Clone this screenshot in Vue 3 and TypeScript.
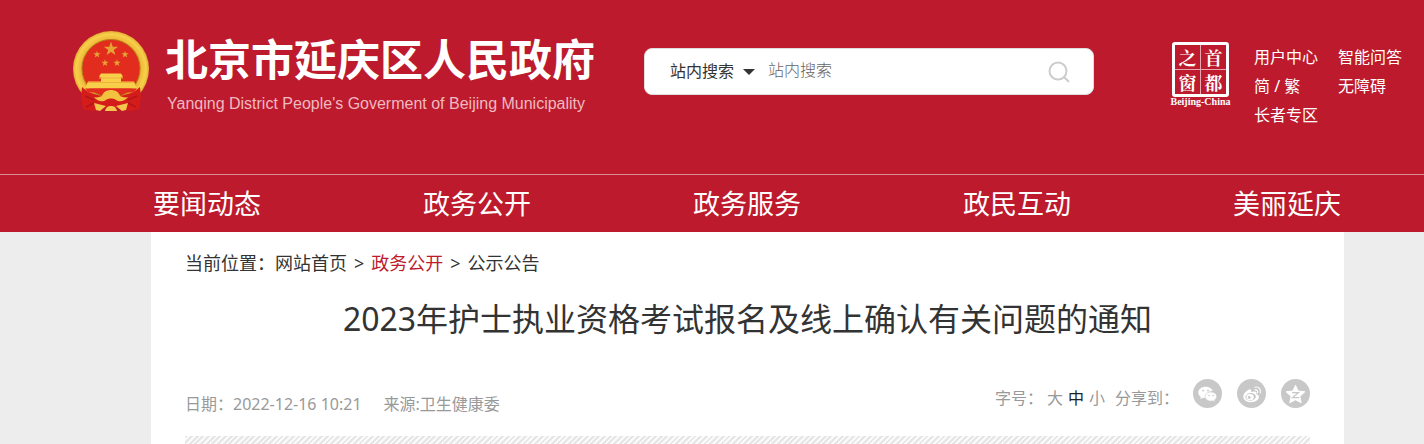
<script setup lang="ts">
import { ref } from 'vue'

interface LinkItem {
  label: string
  href: string
}

const keyword = ref('')
const scope = ref('site')
const fontSize = ref('中')

const quickLinks: LinkItem[] = [
  { label: '用户中心', href: '#user' },
  { label: '智能问答', href: '#qa' },
  { label: '简 / 繁', href: '#lang' },
  { label: '无障碍', href: '#access' },
  { label: '长者专区', href: '#elder' },
]

const navItems: LinkItem[] = [
  { label: '要闻动态', href: '#news' },
  { label: '政务公开', href: '#open' },
  { label: '政务服务', href: '#service' },
  { label: '政民互动', href: '#interact' },
  { label: '美丽延庆', href: '#yanqing' },
]

const sizes: string[] = ['大', '中', '小']

const smallStars = [
  { x: 25, y: 24.5 },
  { x: 53, y: 24.5 },
  { x: 33, y: 33 },
  { x: 45, y: 33 },
]
</script>

<template>
  <div class="page">
    <header class="header">
      <div class="top">
        <a class="brand" href="#home">
          <svg class="emblem" viewBox="0 0 78 82" aria-hidden="true">
            <defs>
              <radialGradient id="ring" cx="50%" cy="50%" r="50%">
                <stop offset="74%" stop-color="#cf9722" />
                <stop offset="80%" stop-color="#efba39" />
                <stop offset="92%" stop-color="#f7d04c" />
                <stop offset="100%" stop-color="#e3ab31" />
              </radialGradient>
              <path id="star" d="M0-1 .23-.31.95-.31.37.12.59.81 0 .39-.59.81-.37.12-.95-.31-.23-.31Z" />
            </defs>
            <circle cx="39" cy="39" r="38" fill="url(#ring)" />
            <circle cx="39" cy="38.500" r="29" fill="#e12c1e" stroke="#b77a19" />
            <use href="#star" transform="translate(39 19) scale(7.500)" fill="#e6a233" />
            <use
              v-for="s in smallStars"
              :key="`${s.x}-${s.y}`"
              href="#star"
              :transform="`translate(${s.x} ${s.y}) scale(3.800)`"
              fill="#e6a233"
            />
            <path d="M29 43.500h20l2 3-2 1v4h13l3 7H13l3-7h13v-4l-2-1Z" fill="#f7cf4a" />
            <path d="M27 48h24M16 52.500h46" stroke="#eeb13a" />
            <path d="M13 58.500h52l-3 4H16Z" fill="#e12c1e" />
            <path d="M10 57 16 62 29 66 39 62 49 66 62 62 68 57 69 68 67 79 58 81 39 77 20 81 11 79 9 68Z" fill="#d41d1b" />
            <path d="M13 66 22 70M14 77 22 73M65 66 56 70M64 77 56 73" stroke="#b3151b" stroke-width="1.500" />
            <path d="M22 67c3 1 5 0 8-1 1-4 5-6 9-6s8 2 9 6c3 1 5 2 8 1-4 5-9 5-12 3-2-2-8-2-10 0-3 2-8 2-12-3Z" fill="#f3c23e" />
            <path d="M22 73 34 76 28 81 24 80Z" fill="#f3c64c" />
            <path d="M56 73 44 76 50 81 54 80Z" fill="#f3c64c" />
            <path d="M33 81c1-4 3-5 6-5s5 1 6 5Z" fill="#f3c64c" />
          </svg>
          <span class="brand-text">
            <span class="brand-name">北京市延庆区人民政府</span>
            <span class="brand-en">Yanqing District People's Goverment of Beijing Municipality</span>
          </span>
        </a>

        <form class="search" @submit.prevent>
          <select v-model="scope" class="scope" aria-label="搜索范围">
            <option value="site">站内搜索</option>
          </select>
          <svg class="caret" viewBox="0 0 12 6" aria-hidden="true"><path d="M0 0h12L6 6Z" fill="#333" /></svg>
          <input v-model="keyword" class="keyword" type="text" placeholder="站内搜索" aria-label="站内搜索" />
          <button class="search-btn" type="submit" aria-label="搜索">
            <svg viewBox="0 0 22 22" fill="none" stroke="#ccc" stroke-width="2">
              <circle cx="10" cy="10" r="8.500" />
              <path d="m16 16 5 5" />
            </svg>
          </button>
        </form>

        <div class="aside">
          <a class="capital" href="#capital" aria-label="首都之窗">
            <span class="seal">
              <span>之</span><span>首</span><span>窗</span><span>都</span>
            </span>
            <span class="capital-en">Beijing-China</span>
          </a>
          <nav class="quick" aria-label="快捷入口">
            <a v-for="l in quickLinks" :key="l.label" :href="l.href">{{ l.label }}</a>
          </nav>
        </div>
      </div>

      <nav class="nav" aria-label="主导航">
        <a v-for="n in navItems" :key="n.label" :href="n.href">{{ n.label }}</a>
      </nav>
    </header>

    <main class="content">
      <nav class="crumbs" aria-label="当前位置">
        <span>当前位置：</span><a href="#home">网站首页</a><span class="sep">&gt;</span><a class="active" href="#open">政务公开</a><span class="sep">&gt;</span><a href="#notice">公示公告</a>
      </nav>

      <h1 class="title">2023年护士执业资格考试报名及线上确认有关问题的通知</h1>

      <div class="meta">
        <div class="info">
          <span>日期：2022-12-16 10:21</span>
          <span>来源:卫生健康委</span>
        </div>
        <div class="tools">
          <span class="label">字号：</span>
          <div class="sizes">
            <button
              v-for="s in sizes"
              :key="s"
              type="button"
              :class="{ current: s === fontSize }"
              @click="fontSize = s"
            >{{ s }}</button>
          </div>
          <span class="share-label">分享到：</span>
          <div class="share">
            <button type="button" aria-label="微信">
              <svg viewBox="0 0 30 30">
                <circle cx="15" cy="15" r="15" fill="#c8c8c8" />
                <path d="M13 8c-4.400 0-7.500 2.700-7.500 6 0 1.900 1 3.500 2.600 4.600L7.500 21l2.800-1.500c.9.300 1.800.4 2.700.4h.6c-1.200-4 2-7.300 6.800-7.400C19.700 9.900 16.700 8 13 8Z" fill="#fff" />
                <path d="M18.500 13.500c-3.500 0-6 2.100-6 4.700s2.500 4.700 6 4.700c.7 0 1.400-.1 2-.3l2.300 1.200-.6-2c1.400-.9 2.300-2.200 2.300-3.600 0-2.600-2.500-4.700-6-4.700Z" fill="#fff" stroke="#c8c8c8" stroke-width=".6" />
                <g fill="#c8c8c8"><circle cx="10.500" cy="12" r="1" /><circle cx="15.500" cy="12" r="1" /><circle cx="16.500" cy="17" r=".8" /><circle cx="20.800" cy="17" r=".8" /></g>
              </svg>
            </button>
            <button type="button" aria-label="微博">
              <svg viewBox="0 0 30 30">
                <circle cx="15" cy="15" r="15" fill="#c8c8c8" />
                <path d="M14.500 11c-1.500-1.800-8 3.200-8 7.300 0 3.600 4 5.700 7.800 5.700 5 0 8.400-2.900 8.400-5.400 0-1.700-1.300-2.600-2.700-3 .9-2.300-.8-3.300-4.500-2.100-.5.200-.8-.3-1-2.500Z" fill="#fff" />
                <ellipse cx="14" cy="18.500" rx="5.500" ry="4" fill="#c8c8c8" transform="rotate(-8 14 18)" />
                <ellipse cx="13.500" cy="18.800" rx="3.800" ry="3.200" fill="#fff" />
                <circle cx="12.700" cy="19.200" r="1.500" fill="#c8c8c8" />
                <path d="M18.500 8.500c4-1 6.800 2.500 5.500 6M18.700 11.300c2-.4 3.100.9 2.600 2.700" fill="none" stroke="#fff" stroke-width="1.200" stroke-linecap="round" />
              </svg>
            </button>
            <button type="button" aria-label="QQ空间">
              <svg viewBox="0 0 30 30">
                <circle cx="15" cy="15" r="15" fill="#c8c8c8" />
                <path d="m15 6.500 2.700 6 7 .7-5.200 4.800 1.400 6.500-5.900-3-5.900 3 1.400-6.500-5.200-4.800 7-.7Z" fill="#fff" stroke="#fff" stroke-linejoin="round" />
                <path d="M11.500 14.200h6.500l-6 5h7" fill="none" stroke="#c8c8c8" stroke-width="1.300" />
              </svg>
            </button>
          </div>
        </div>
      </div>

      <div class="hatch"></div>
    </main>
  </div>
</template>

<style>
body {
  background: #ededed;
}
</style>

<style scoped>
.page {
  font-family: "Noto Sans", "Noto Sans CJK SC", sans-serif;
  color: #333;
  background: #ededed;
}

.page,
.page * {
  box-sizing: border-box;
}

a {
  color: inherit;
  text-decoration: none;
}

button {
  padding: 0;
  border: 0;
  background: none;
  font: inherit;
  color: inherit;
  cursor: pointer;
}

svg {
  display: block;
}

.header {
  background: #bd1a2d;
  color: #fff;
}

.top {
  display: flex;
  align-items: flex-start;
  padding: 30px 22px 40px 72px;
  min-height: 174px;
}

.brand {
  display: flex;
  gap: 15px;
  width: 572px;
  flex: none;
}

.emblem {
  width: 78px;
  height: 82px;
}

.brand-text {
  display: flex;
  flex-direction: column;
  white-space: nowrap;
}

.brand-name {
  font-size: 43px;
  line-height: 60px;
  font-weight: 700;
}

.brand-en {
  padding-left: 2px;
  font-family: "Liberation Sans", Arial, sans-serif;
  font-size: 16px;
  line-height: 28px;
  color: #efb9c0;
}

.search {
  display: flex;
  align-items: center;
  flex: 0 1 450px;
  height: 47px;
  margin-top: 18px;
  padding: 0 23px 0 25px;
  border: 1px solid #ddd;
  border-radius: 8px;
  background: #fff;
}

.scope {
  width: 64px;
  padding: 0 0 2px;
  border: 0;
  appearance: none;
  background: none;
  font: inherit;
  font-size: 16px;
  color: #333;
}

.caret {
  width: 12px;
  height: 6px;
  margin: 0 13px 0 9px;
}

.keyword {
  flex: 1;
  min-width: 0;
  padding: 0 0 4px;
  border: 0;
  outline: 0;
  background: none;
  font: inherit;
  font-size: 16px;
  font-weight: 300;
  color: #333;
}

.keyword::placeholder {
  color: #666;
}

.search-btn svg {
  width: 22px;
  height: 22px;
}

.aside {
  display: flex;
  gap: 22px;
  margin-left: auto;
  padding-top: 12px;
}

.capital {
  display: flex;
  flex-direction: column;
  align-items: center;
  width: 63px;
}

.seal {
  display: grid;
  grid-template-columns: 1fr 1fr;
  gap: 1px;
  width: 57px;
  height: 55px;
  border: 3px solid #fff;
  border-radius: 3px;
  background: #e9a8b0;
  font-family: "Noto Serif CJK SC", "Noto Sans CJK SC", serif;
  font-size: 18px;
  line-height: 24px;
  font-weight: 700;
  text-align: center;
}

.seal span {
  background: #bd1a2d;
}

.capital-en {
  font-family: "Liberation Serif", serif;
  font-size: 10px;
  line-height: 10px;
  font-weight: 700;
  white-space: nowrap;
}

.quick {
  display: grid;
  grid-template-columns: 64px 64px;
  column-gap: 20px;
  padding-top: 1px;
  font-size: 16px;
  line-height: 29px;
  white-space: nowrap;
}

.nav {
  display: flex;
  justify-content: space-between;
  padding: 1px 83px 0 153px;
  border-top: 1px solid #de8c96;
  font-size: 27px;
  line-height: 56px;
  white-space: nowrap;
}

.content {
  margin: 0 80px 0 151px;
  padding: 0 34px;
  background: #fff;
}

.crumbs {
  padding-top: 16px;
  font-size: 18px;
  line-height: 30px;
}

.sep {
  margin: 0 7px;
}

.active {
  color: #bd1a2d;
}

.title {
  margin: 17px 0 0;
  font-size: 32px;
  line-height: 48px;
  font-weight: 400;
  text-align: center;
  white-space: nowrap;
}

.meta {
  display: flex;
  justify-content: space-between;
  margin-top: 35px;
  font-size: 16px;
  line-height: 24px;
  color: #999;
  white-space: nowrap;
}

.info {
  display: flex;
  gap: 22px;
  padding: 14px 0 20px;
}

.tools {
  display: flex;
  align-items: flex-start;
}

.label,
.sizes,
.share-label {
  padding-top: 8px;
}

.sizes {
  display: flex;
  gap: 5px;
  margin: 0 10px 0 4px;
}

.current {
  color: #222;
}

.share-label {
  margin-right: 14px;
}

.share {
  display: flex;
  gap: 15px;
  padding-top: 1px;
}

.share svg {
  width: 29px;
  height: 29px;
}

.hatch {
  height: 8px;
  background: repeating-linear-gradient(135deg, #e6e6e6 0 2px, #fafafa 2px 4px);
}
</style>
